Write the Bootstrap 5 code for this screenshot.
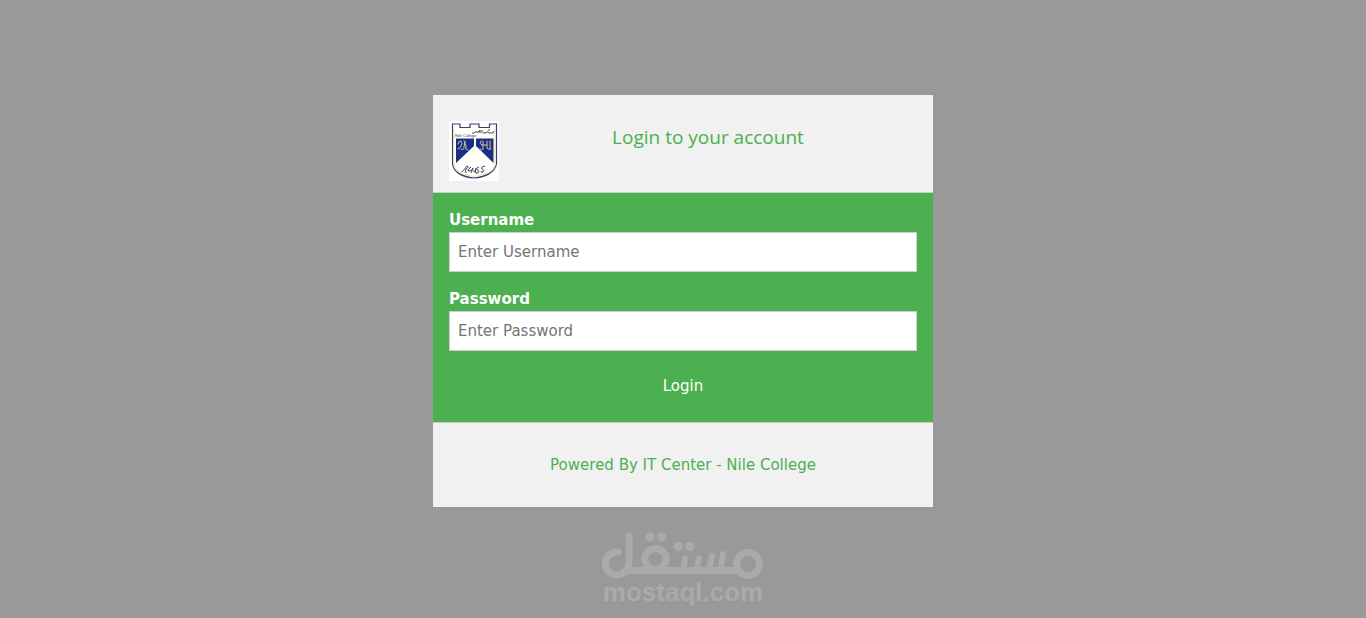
<!DOCTYPE html>
<html lang="en">
<head>
<meta charset="utf-8">
<meta name="viewport" content="width=device-width, initial-scale=1">
<title>Login</title>
<link href="https://cdn.jsdelivr.net/npm/bootstrap@5.3.0/dist/css/bootstrap.min.css" rel="stylesheet">
<style>
  body { background: #999; color: #4caf50; font: 15px/23px Verdana, "DejaVu Sans", sans-serif; padding-top: 95px; }
  .login-box { max-width: 500px; background: #f1f1f1; }
  .login-head { padding: 26px 16px 11px; border-bottom: 1px solid #ccc; }
  .login-head h1 { font: 400 19px/32px "Segoe UI", "Open Sans", sans-serif; }
  .login-form { background: #4caf50; color: #fff; padding: 16px; }
  .login-form .form-control { height: 40px; padding: 8px; border-color: #ccc; font-size: 15px; line-height: 23px; }
  .login-form .form-control::placeholder { color: #757575; }
  .login-form .btn { color: #fff; font-size: 15px; line-height: 23px; padding: 8px 16px; border: 0; }
  .login-foot { padding: 31px 16px 30px; border-top: 1px solid #ccc; }
  .watermark { color: #a8abaa; font: 700 26px/30px "Liberation Sans", Arial, sans-serif; margin-top: 24px; }
</style>
</head>
<body>
<main class="login-box mx-auto">
  <header class="login-head d-flex align-items-start">
    <svg class="flex-shrink-0" width="50" height="60" viewBox="0 0 50 60" role="img" aria-label="Nile College crest">
      <path fill="#fff" d="M0 0h50v60H0z"/>
      <path fill="#fffffa" stroke="#39406b" stroke-width="1.200" d="M3.500 3H11V6.500H21V3H30V6.500H40.500V3H47.500V43C46 51 37 56 25 57C13 56 4.500 51 3.500 43Z"/>
      <path fill="none" stroke="#e8dda8" stroke-width=".8" d="M5 8V42C5 50 14 54 25 55.500C36 54 46 50 46 42V8"/>
      <path fill="#182f83" d="M7 17.500h18V25L7 42ZM27 17.500h17.500V42L27 25Z"/>
      <g fill="none" stroke="#cfc2a0" stroke-width="1" stroke-linecap="round">
        <path d="M9 23q0-3 3-3q2 2 0 5q-2 4-3 3M12 28q3 2 3-2l1-6M15 20q2 1 2 8l2 1M32 20q-2 3 1 4M34 20v8q-1 2-3 0M33 24h5M38 20v7q1 2 4 1M41 20v8"/>
      </g>
      <g fill="none" stroke="#30334e" stroke-width=".9">
        <path d="M13 51l5-6q3 1-1 3q-1 1 0 4M22 46q-5 4-2 4q3 0 4-3l-2 5M24 50h3M27 47l-1 5M30 46q-4 1-2 3q3 0 1 3q-2 1-2-1M36 45q-5 1-3 3q3 1 1 3q-2 1-2-1"/>
        <path d="M23 12q2 1 3-1h4l1-2v3M33 12V9M34 12h3q1-3 3 0h4l1-2M39 9h2"/>
      </g>
      <text x="6" y="16" font-family="Liberation Sans, sans-serif" font-size="4" fill="#39406b">Nile College</text>
    </svg>
    <h1 class="flex-grow-1 text-center mb-0">Login to your account</h1>
  </header>
  <form class="login-form">
    <label class="d-block fw-bold" for="username">Username</label>
    <input class="form-control rounded-0 mb-3" type="text" id="username" placeholder="Enter Username" required>
    <label class="d-block fw-bold" for="password">Password</label>
    <input class="form-control rounded-0 mb-3" type="password" id="password" placeholder="Enter Password" required>
    <button class="btn rounded-0 w-100 d-block" type="submit">Login</button>
  </form>
  <footer class="login-foot text-center">Powered By IT Center - Nile College</footer>
</main>
<div class="watermark d-flex flex-column align-items-center">
  <svg width="162" height="48" viewBox="602 531 162 48" role="img" aria-label="مستقل">
    <g fill="none" stroke="currentColor" stroke-width="7" stroke-linecap="round">
      <path d="M618 552A11.500 11.500 0 1 0 627 569Q629 566 629 562V536M626 570.500H740"/>
      <circle cx="655.500" cy="559" r="10.500"/>
      <circle cx="748" cy="564" r="11.500"/>
      <path stroke-width="6" d="M685 558L684 569M699 558L697 569M712 556L709 569M723 554L721 569"/>
    </g>
    <g fill="currentColor">
      <circle cx="650" cy="537" r="4.700"/><circle cx="661.500" cy="537" r="4.700"/>
      <circle cx="678.500" cy="546.500" r="4.700"/><circle cx="690" cy="546.500" r="4.700"/>
    </g>
  </svg>
  <span class="lh-1">mostaql.com</span>
</div>
<script src="https://cdn.jsdelivr.net/npm/bootstrap@5.3.0/dist/js/bootstrap.bundle.min.js"></script>
</body>
</html>
